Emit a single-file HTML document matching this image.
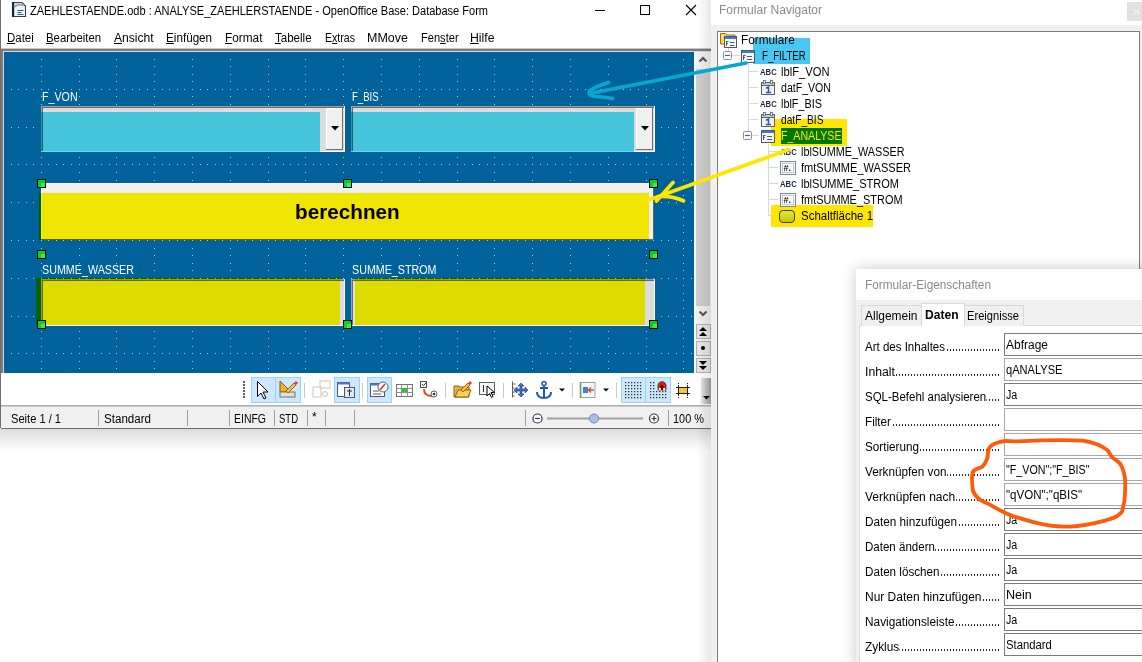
<!DOCTYPE html><html><head><meta charset="utf-8"><style>
*{margin:0;padding:0}
html,body{width:1142px;height:662px;overflow:hidden;background:#fff}
body{position:relative;font-family:"Liberation Sans",sans-serif;}
.r{position:absolute;}
.t{position:absolute;white-space:nowrap;transform-origin:0 0;font-family:"Liberation Sans",sans-serif;}
u{text-decoration:underline;text-underline-offset:1px;text-decoration-thickness:1px}
.lab{font-size:12px;line-height:12px;height:15px;color:#000;width:135px;overflow:hidden;}
.dots{letter-spacing:-0.2px}
</style></head><body><div class="r" style="left:0px;top:0px;width:711px;height:428px;background:#fff;"></div>
<div class="r" style="left:0px;top:0px;width:1px;height:428px;background:#707070;"></div>
<svg class="r" style="left:11px;top:1px" width="16" height="18" viewBox="0 0 16 18">
<path d="M1.5 1.5h9.5l3.5 3.5v10.5h-13z" fill="#f2f5f8" stroke="#3a4048" stroke-width="1.1"/>
<path d="M1 1h2.2v15H1z" fill="#1a2430"/>
<path d="M3 6C6 3.5 9 3 12.5 4.5" stroke="#8a9aac" stroke-width="1.8" fill="none"/>
<path d="M3 3.5C6 2.5 8 2.5 10 3" stroke="#c8d2dc" stroke-width="1.2" fill="none"/>
<path d="M6.5 9.5h6M6.5 11.5h4M6.5 13.5h6" stroke="#2a5a8a" stroke-width="1.2"/>
</svg>
<div class="t" style="left:30.00px;top:4.74px;font-size:12px;line-height:12px;color:#000;transform:scaleX(0.9185);">ZAEHLESTAENDE.odb : ANALYSE_ZAEHLERSTAENDE - OpenOffice Base: Database Form</div>
<div class="r" style="left:595px;top:10px;width:10px;height:1px;background:#000;"></div>
<div class="r" style="left:640px;top:5px;width:10px;height:10px;border:1px solid #000;box-sizing:border-box;"></div>
<svg class="r" style="left:685px;top:4px" width="12" height="12" viewBox="0 0 12 12"><path d="M1 1L11 11M11 1L1 11" stroke="#000" stroke-width="1.1"/></svg>
<div class="t" style="left:7.10px;top:31.84px;font-size:12px;line-height:12px;color:#000;transform:scaleX(0.9531);"><u>D</u>atei</div>
<div class="t" style="left:46.10px;top:31.84px;font-size:12px;line-height:12px;color:#000;transform:scaleX(0.9494);"><u>B</u>earbeiten</div>
<div class="t" style="left:114.00px;top:31.84px;font-size:12px;line-height:12px;color:#000;transform:scaleX(1.0089);"><u>A</u>nsicht</div>
<div class="t" style="left:166.20px;top:31.84px;font-size:12px;line-height:12px;color:#000;transform:scaleX(0.9732);"><u>E</u>infügen</div>
<div class="t" style="left:225.00px;top:31.84px;font-size:12px;line-height:12px;color:#000;transform:scaleX(0.9842);"><u>F</u>ormat</div>
<div class="t" style="left:275.30px;top:31.84px;font-size:12px;line-height:12px;color:#000;transform:scaleX(0.9625);"><u>T</u>abelle</div>
<div class="t" style="left:324.60px;top:31.84px;font-size:12px;line-height:12px;color:#000;transform:scaleX(0.8822);">E<u>x</u>tras</div>
<div class="t" style="left:367.30px;top:31.84px;font-size:12px;line-height:12px;color:#000;transform:scaleX(1.0397);">MMove</div>
<div class="t" style="left:420.50px;top:31.84px;font-size:12px;line-height:12px;color:#000;transform:scaleX(0.9243);">Fen<u>s</u>ter</div>
<div class="t" style="left:470.20px;top:31.84px;font-size:12px;line-height:12px;color:#000;transform:scaleX(1.0206);"><u>H</u>ilfe</div>
<div class="r" style="left:1px;top:48px;width:710px;height:1px;background:#c4c4c4;"></div>
<div class="r" style="left:1px;top:49px;width:710px;height:2px;background:#7c7c7c;"></div>
<div class="r" style="left:3px;top:51px;width:708px;height:1px;background:#dcdcdc;"></div>
<div class="r" style="left:1px;top:51px;width:2px;height:322px;background:#7c7c7c;"></div>
<div class="r" style="left:3px;top:51px;width:1px;height:322px;background:#d8d8d8;"></div>
<div class="r" style="left:4px;top:52px;width:690px;height:321px;background:#00629b;"></div>
<svg class="r" style="left:0;top:0" width="711" height="428"><path d="M11 89h1v1h-1zM11 127h1v1h-1zM11 164h1v1h-1zM11 202h1v1h-1zM11 240h1v1h-1zM11 278h1v1h-1zM11 316h1v1h-1zM11 353h1v1h-1zM18 89h1v1h-1zM18 127h1v1h-1zM18 164h1v1h-1zM18 202h1v1h-1zM18 240h1v1h-1zM18 278h1v1h-1zM18 316h1v1h-1zM18 353h1v1h-1zM26 89h1v1h-1zM26 127h1v1h-1zM26 164h1v1h-1zM26 202h1v1h-1zM26 240h1v1h-1zM26 278h1v1h-1zM26 316h1v1h-1zM26 353h1v1h-1zM33 89h1v1h-1zM33 127h1v1h-1zM33 164h1v1h-1zM33 202h1v1h-1zM33 240h1v1h-1zM33 278h1v1h-1zM33 316h1v1h-1zM33 353h1v1h-1zM41 59h1v1h-1zM41 66h1v1h-1zM41 74h1v1h-1zM41 81h1v1h-1zM41 89h1v1h-1zM41 96h1v1h-1zM41 104h1v1h-1zM41 111h1v1h-1zM41 119h1v1h-1zM41 127h1v1h-1zM41 134h1v1h-1zM41 142h1v1h-1zM41 149h1v1h-1zM41 157h1v1h-1zM41 164h1v1h-1zM41 172h1v1h-1zM41 180h1v1h-1zM41 187h1v1h-1zM41 195h1v1h-1zM41 202h1v1h-1zM41 210h1v1h-1zM41 217h1v1h-1zM41 225h1v1h-1zM41 232h1v1h-1zM41 240h1v1h-1zM41 248h1v1h-1zM41 255h1v1h-1zM41 263h1v1h-1zM41 270h1v1h-1zM41 278h1v1h-1zM41 285h1v1h-1zM41 293h1v1h-1zM41 300h1v1h-1zM41 308h1v1h-1zM41 316h1v1h-1zM41 323h1v1h-1zM41 331h1v1h-1zM41 338h1v1h-1zM41 346h1v1h-1zM41 353h1v1h-1zM41 361h1v1h-1zM41 368h1v1h-1zM48 89h1v1h-1zM48 127h1v1h-1zM48 164h1v1h-1zM48 202h1v1h-1zM48 240h1v1h-1zM48 278h1v1h-1zM48 316h1v1h-1zM48 353h1v1h-1zM56 89h1v1h-1zM56 127h1v1h-1zM56 164h1v1h-1zM56 202h1v1h-1zM56 240h1v1h-1zM56 278h1v1h-1zM56 316h1v1h-1zM56 353h1v1h-1zM63 89h1v1h-1zM63 127h1v1h-1zM63 164h1v1h-1zM63 202h1v1h-1zM63 240h1v1h-1zM63 278h1v1h-1zM63 316h1v1h-1zM63 353h1v1h-1zM71 89h1v1h-1zM71 127h1v1h-1zM71 164h1v1h-1zM71 202h1v1h-1zM71 240h1v1h-1zM71 278h1v1h-1zM71 316h1v1h-1zM71 353h1v1h-1zM79 59h1v1h-1zM79 66h1v1h-1zM79 74h1v1h-1zM79 81h1v1h-1zM79 89h1v1h-1zM79 96h1v1h-1zM79 104h1v1h-1zM79 111h1v1h-1zM79 119h1v1h-1zM79 127h1v1h-1zM79 134h1v1h-1zM79 142h1v1h-1zM79 149h1v1h-1zM79 157h1v1h-1zM79 164h1v1h-1zM79 172h1v1h-1zM79 180h1v1h-1zM79 187h1v1h-1zM79 195h1v1h-1zM79 202h1v1h-1zM79 210h1v1h-1zM79 217h1v1h-1zM79 225h1v1h-1zM79 232h1v1h-1zM79 240h1v1h-1zM79 248h1v1h-1zM79 255h1v1h-1zM79 263h1v1h-1zM79 270h1v1h-1zM79 278h1v1h-1zM79 285h1v1h-1zM79 293h1v1h-1zM79 300h1v1h-1zM79 308h1v1h-1zM79 316h1v1h-1zM79 323h1v1h-1zM79 331h1v1h-1zM79 338h1v1h-1zM79 346h1v1h-1zM79 353h1v1h-1zM79 361h1v1h-1zM79 368h1v1h-1zM86 89h1v1h-1zM86 127h1v1h-1zM86 164h1v1h-1zM86 202h1v1h-1zM86 240h1v1h-1zM86 278h1v1h-1zM86 316h1v1h-1zM86 353h1v1h-1zM94 89h1v1h-1zM94 127h1v1h-1zM94 164h1v1h-1zM94 202h1v1h-1zM94 240h1v1h-1zM94 278h1v1h-1zM94 316h1v1h-1zM94 353h1v1h-1zM101 89h1v1h-1zM101 127h1v1h-1zM101 164h1v1h-1zM101 202h1v1h-1zM101 240h1v1h-1zM101 278h1v1h-1zM101 316h1v1h-1zM101 353h1v1h-1zM109 89h1v1h-1zM109 127h1v1h-1zM109 164h1v1h-1zM109 202h1v1h-1zM109 240h1v1h-1zM109 278h1v1h-1zM109 316h1v1h-1zM109 353h1v1h-1zM116 59h1v1h-1zM116 66h1v1h-1zM116 74h1v1h-1zM116 81h1v1h-1zM116 89h1v1h-1zM116 96h1v1h-1zM116 104h1v1h-1zM116 111h1v1h-1zM116 119h1v1h-1zM116 127h1v1h-1zM116 134h1v1h-1zM116 142h1v1h-1zM116 149h1v1h-1zM116 157h1v1h-1zM116 164h1v1h-1zM116 172h1v1h-1zM116 180h1v1h-1zM116 187h1v1h-1zM116 195h1v1h-1zM116 202h1v1h-1zM116 210h1v1h-1zM116 217h1v1h-1zM116 225h1v1h-1zM116 232h1v1h-1zM116 240h1v1h-1zM116 248h1v1h-1zM116 255h1v1h-1zM116 263h1v1h-1zM116 270h1v1h-1zM116 278h1v1h-1zM116 285h1v1h-1zM116 293h1v1h-1zM116 300h1v1h-1zM116 308h1v1h-1zM116 316h1v1h-1zM116 323h1v1h-1zM116 331h1v1h-1zM116 338h1v1h-1zM116 346h1v1h-1zM116 353h1v1h-1zM116 361h1v1h-1zM116 368h1v1h-1zM124 89h1v1h-1zM124 127h1v1h-1zM124 164h1v1h-1zM124 202h1v1h-1zM124 240h1v1h-1zM124 278h1v1h-1zM124 316h1v1h-1zM124 353h1v1h-1zM132 89h1v1h-1zM132 127h1v1h-1zM132 164h1v1h-1zM132 202h1v1h-1zM132 240h1v1h-1zM132 278h1v1h-1zM132 316h1v1h-1zM132 353h1v1h-1zM139 89h1v1h-1zM139 127h1v1h-1zM139 164h1v1h-1zM139 202h1v1h-1zM139 240h1v1h-1zM139 278h1v1h-1zM139 316h1v1h-1zM139 353h1v1h-1zM147 89h1v1h-1zM147 127h1v1h-1zM147 164h1v1h-1zM147 202h1v1h-1zM147 240h1v1h-1zM147 278h1v1h-1zM147 316h1v1h-1zM147 353h1v1h-1zM154 59h1v1h-1zM154 66h1v1h-1zM154 74h1v1h-1zM154 81h1v1h-1zM154 89h1v1h-1zM154 96h1v1h-1zM154 104h1v1h-1zM154 111h1v1h-1zM154 119h1v1h-1zM154 127h1v1h-1zM154 134h1v1h-1zM154 142h1v1h-1zM154 149h1v1h-1zM154 157h1v1h-1zM154 164h1v1h-1zM154 172h1v1h-1zM154 180h1v1h-1zM154 187h1v1h-1zM154 195h1v1h-1zM154 202h1v1h-1zM154 210h1v1h-1zM154 217h1v1h-1zM154 225h1v1h-1zM154 232h1v1h-1zM154 240h1v1h-1zM154 248h1v1h-1zM154 255h1v1h-1zM154 263h1v1h-1zM154 270h1v1h-1zM154 278h1v1h-1zM154 285h1v1h-1zM154 293h1v1h-1zM154 300h1v1h-1zM154 308h1v1h-1zM154 316h1v1h-1zM154 323h1v1h-1zM154 331h1v1h-1zM154 338h1v1h-1zM154 346h1v1h-1zM154 353h1v1h-1zM154 361h1v1h-1zM154 368h1v1h-1zM162 89h1v1h-1zM162 127h1v1h-1zM162 164h1v1h-1zM162 202h1v1h-1zM162 240h1v1h-1zM162 278h1v1h-1zM162 316h1v1h-1zM162 353h1v1h-1zM169 89h1v1h-1zM169 127h1v1h-1zM169 164h1v1h-1zM169 202h1v1h-1zM169 240h1v1h-1zM169 278h1v1h-1zM169 316h1v1h-1zM169 353h1v1h-1zM177 89h1v1h-1zM177 127h1v1h-1zM177 164h1v1h-1zM177 202h1v1h-1zM177 240h1v1h-1zM177 278h1v1h-1zM177 316h1v1h-1zM177 353h1v1h-1zM184 89h1v1h-1zM184 127h1v1h-1zM184 164h1v1h-1zM184 202h1v1h-1zM184 240h1v1h-1zM184 278h1v1h-1zM184 316h1v1h-1zM184 353h1v1h-1zM192 59h1v1h-1zM192 66h1v1h-1zM192 74h1v1h-1zM192 81h1v1h-1zM192 89h1v1h-1zM192 96h1v1h-1zM192 104h1v1h-1zM192 111h1v1h-1zM192 119h1v1h-1zM192 127h1v1h-1zM192 134h1v1h-1zM192 142h1v1h-1zM192 149h1v1h-1zM192 157h1v1h-1zM192 164h1v1h-1zM192 172h1v1h-1zM192 180h1v1h-1zM192 187h1v1h-1zM192 195h1v1h-1zM192 202h1v1h-1zM192 210h1v1h-1zM192 217h1v1h-1zM192 225h1v1h-1zM192 232h1v1h-1zM192 240h1v1h-1zM192 248h1v1h-1zM192 255h1v1h-1zM192 263h1v1h-1zM192 270h1v1h-1zM192 278h1v1h-1zM192 285h1v1h-1zM192 293h1v1h-1zM192 300h1v1h-1zM192 308h1v1h-1zM192 316h1v1h-1zM192 323h1v1h-1zM192 331h1v1h-1zM192 338h1v1h-1zM192 346h1v1h-1zM192 353h1v1h-1zM192 361h1v1h-1zM192 368h1v1h-1zM200 89h1v1h-1zM200 127h1v1h-1zM200 164h1v1h-1zM200 202h1v1h-1zM200 240h1v1h-1zM200 278h1v1h-1zM200 316h1v1h-1zM200 353h1v1h-1zM207 89h1v1h-1zM207 127h1v1h-1zM207 164h1v1h-1zM207 202h1v1h-1zM207 240h1v1h-1zM207 278h1v1h-1zM207 316h1v1h-1zM207 353h1v1h-1zM215 89h1v1h-1zM215 127h1v1h-1zM215 164h1v1h-1zM215 202h1v1h-1zM215 240h1v1h-1zM215 278h1v1h-1zM215 316h1v1h-1zM215 353h1v1h-1zM222 89h1v1h-1zM222 127h1v1h-1zM222 164h1v1h-1zM222 202h1v1h-1zM222 240h1v1h-1zM222 278h1v1h-1zM222 316h1v1h-1zM222 353h1v1h-1zM230 59h1v1h-1zM230 66h1v1h-1zM230 74h1v1h-1zM230 81h1v1h-1zM230 89h1v1h-1zM230 96h1v1h-1zM230 104h1v1h-1zM230 111h1v1h-1zM230 119h1v1h-1zM230 127h1v1h-1zM230 134h1v1h-1zM230 142h1v1h-1zM230 149h1v1h-1zM230 157h1v1h-1zM230 164h1v1h-1zM230 172h1v1h-1zM230 180h1v1h-1zM230 187h1v1h-1zM230 195h1v1h-1zM230 202h1v1h-1zM230 210h1v1h-1zM230 217h1v1h-1zM230 225h1v1h-1zM230 232h1v1h-1zM230 240h1v1h-1zM230 248h1v1h-1zM230 255h1v1h-1zM230 263h1v1h-1zM230 270h1v1h-1zM230 278h1v1h-1zM230 285h1v1h-1zM230 293h1v1h-1zM230 300h1v1h-1zM230 308h1v1h-1zM230 316h1v1h-1zM230 323h1v1h-1zM230 331h1v1h-1zM230 338h1v1h-1zM230 346h1v1h-1zM230 353h1v1h-1zM230 361h1v1h-1zM230 368h1v1h-1zM237 89h1v1h-1zM237 127h1v1h-1zM237 164h1v1h-1zM237 202h1v1h-1zM237 240h1v1h-1zM237 278h1v1h-1zM237 316h1v1h-1zM237 353h1v1h-1zM245 89h1v1h-1zM245 127h1v1h-1zM245 164h1v1h-1zM245 202h1v1h-1zM245 240h1v1h-1zM245 278h1v1h-1zM245 316h1v1h-1zM245 353h1v1h-1zM252 89h1v1h-1zM252 127h1v1h-1zM252 164h1v1h-1zM252 202h1v1h-1zM252 240h1v1h-1zM252 278h1v1h-1zM252 316h1v1h-1zM252 353h1v1h-1zM260 89h1v1h-1zM260 127h1v1h-1zM260 164h1v1h-1zM260 202h1v1h-1zM260 240h1v1h-1zM260 278h1v1h-1zM260 316h1v1h-1zM260 353h1v1h-1zM268 59h1v1h-1zM268 66h1v1h-1zM268 74h1v1h-1zM268 81h1v1h-1zM268 89h1v1h-1zM268 96h1v1h-1zM268 104h1v1h-1zM268 111h1v1h-1zM268 119h1v1h-1zM268 127h1v1h-1zM268 134h1v1h-1zM268 142h1v1h-1zM268 149h1v1h-1zM268 157h1v1h-1zM268 164h1v1h-1zM268 172h1v1h-1zM268 180h1v1h-1zM268 187h1v1h-1zM268 195h1v1h-1zM268 202h1v1h-1zM268 210h1v1h-1zM268 217h1v1h-1zM268 225h1v1h-1zM268 232h1v1h-1zM268 240h1v1h-1zM268 248h1v1h-1zM268 255h1v1h-1zM268 263h1v1h-1zM268 270h1v1h-1zM268 278h1v1h-1zM268 285h1v1h-1zM268 293h1v1h-1zM268 300h1v1h-1zM268 308h1v1h-1zM268 316h1v1h-1zM268 323h1v1h-1zM268 331h1v1h-1zM268 338h1v1h-1zM268 346h1v1h-1zM268 353h1v1h-1zM268 361h1v1h-1zM268 368h1v1h-1zM275 89h1v1h-1zM275 127h1v1h-1zM275 164h1v1h-1zM275 202h1v1h-1zM275 240h1v1h-1zM275 278h1v1h-1zM275 316h1v1h-1zM275 353h1v1h-1zM283 89h1v1h-1zM283 127h1v1h-1zM283 164h1v1h-1zM283 202h1v1h-1zM283 240h1v1h-1zM283 278h1v1h-1zM283 316h1v1h-1zM283 353h1v1h-1zM290 89h1v1h-1zM290 127h1v1h-1zM290 164h1v1h-1zM290 202h1v1h-1zM290 240h1v1h-1zM290 278h1v1h-1zM290 316h1v1h-1zM290 353h1v1h-1zM298 89h1v1h-1zM298 127h1v1h-1zM298 164h1v1h-1zM298 202h1v1h-1zM298 240h1v1h-1zM298 278h1v1h-1zM298 316h1v1h-1zM298 353h1v1h-1zM305 59h1v1h-1zM305 66h1v1h-1zM305 74h1v1h-1zM305 81h1v1h-1zM305 89h1v1h-1zM305 96h1v1h-1zM305 104h1v1h-1zM305 111h1v1h-1zM305 119h1v1h-1zM305 127h1v1h-1zM305 134h1v1h-1zM305 142h1v1h-1zM305 149h1v1h-1zM305 157h1v1h-1zM305 164h1v1h-1zM305 172h1v1h-1zM305 180h1v1h-1zM305 187h1v1h-1zM305 195h1v1h-1zM305 202h1v1h-1zM305 210h1v1h-1zM305 217h1v1h-1zM305 225h1v1h-1zM305 232h1v1h-1zM305 240h1v1h-1zM305 248h1v1h-1zM305 255h1v1h-1zM305 263h1v1h-1zM305 270h1v1h-1zM305 278h1v1h-1zM305 285h1v1h-1zM305 293h1v1h-1zM305 300h1v1h-1zM305 308h1v1h-1zM305 316h1v1h-1zM305 323h1v1h-1zM305 331h1v1h-1zM305 338h1v1h-1zM305 346h1v1h-1zM305 353h1v1h-1zM305 361h1v1h-1zM305 368h1v1h-1zM313 89h1v1h-1zM313 127h1v1h-1zM313 164h1v1h-1zM313 202h1v1h-1zM313 240h1v1h-1zM313 278h1v1h-1zM313 316h1v1h-1zM313 353h1v1h-1zM320 89h1v1h-1zM320 127h1v1h-1zM320 164h1v1h-1zM320 202h1v1h-1zM320 240h1v1h-1zM320 278h1v1h-1zM320 316h1v1h-1zM320 353h1v1h-1zM328 89h1v1h-1zM328 127h1v1h-1zM328 164h1v1h-1zM328 202h1v1h-1zM328 240h1v1h-1zM328 278h1v1h-1zM328 316h1v1h-1zM328 353h1v1h-1zM336 89h1v1h-1zM336 127h1v1h-1zM336 164h1v1h-1zM336 202h1v1h-1zM336 240h1v1h-1zM336 278h1v1h-1zM336 316h1v1h-1zM336 353h1v1h-1zM343 59h1v1h-1zM343 66h1v1h-1zM343 74h1v1h-1zM343 81h1v1h-1zM343 89h1v1h-1zM343 96h1v1h-1zM343 104h1v1h-1zM343 111h1v1h-1zM343 119h1v1h-1zM343 127h1v1h-1zM343 134h1v1h-1zM343 142h1v1h-1zM343 149h1v1h-1zM343 157h1v1h-1zM343 164h1v1h-1zM343 172h1v1h-1zM343 180h1v1h-1zM343 187h1v1h-1zM343 195h1v1h-1zM343 202h1v1h-1zM343 210h1v1h-1zM343 217h1v1h-1zM343 225h1v1h-1zM343 232h1v1h-1zM343 240h1v1h-1zM343 248h1v1h-1zM343 255h1v1h-1zM343 263h1v1h-1zM343 270h1v1h-1zM343 278h1v1h-1zM343 285h1v1h-1zM343 293h1v1h-1zM343 300h1v1h-1zM343 308h1v1h-1zM343 316h1v1h-1zM343 323h1v1h-1zM343 331h1v1h-1zM343 338h1v1h-1zM343 346h1v1h-1zM343 353h1v1h-1zM343 361h1v1h-1zM343 368h1v1h-1zM351 89h1v1h-1zM351 127h1v1h-1zM351 164h1v1h-1zM351 202h1v1h-1zM351 240h1v1h-1zM351 278h1v1h-1zM351 316h1v1h-1zM351 353h1v1h-1zM358 89h1v1h-1zM358 127h1v1h-1zM358 164h1v1h-1zM358 202h1v1h-1zM358 240h1v1h-1zM358 278h1v1h-1zM358 316h1v1h-1zM358 353h1v1h-1zM366 89h1v1h-1zM366 127h1v1h-1zM366 164h1v1h-1zM366 202h1v1h-1zM366 240h1v1h-1zM366 278h1v1h-1zM366 316h1v1h-1zM366 353h1v1h-1zM373 89h1v1h-1zM373 127h1v1h-1zM373 164h1v1h-1zM373 202h1v1h-1zM373 240h1v1h-1zM373 278h1v1h-1zM373 316h1v1h-1zM373 353h1v1h-1zM381 59h1v1h-1zM381 66h1v1h-1zM381 74h1v1h-1zM381 81h1v1h-1zM381 89h1v1h-1zM381 96h1v1h-1zM381 104h1v1h-1zM381 111h1v1h-1zM381 119h1v1h-1zM381 127h1v1h-1zM381 134h1v1h-1zM381 142h1v1h-1zM381 149h1v1h-1zM381 157h1v1h-1zM381 164h1v1h-1zM381 172h1v1h-1zM381 180h1v1h-1zM381 187h1v1h-1zM381 195h1v1h-1zM381 202h1v1h-1zM381 210h1v1h-1zM381 217h1v1h-1zM381 225h1v1h-1zM381 232h1v1h-1zM381 240h1v1h-1zM381 248h1v1h-1zM381 255h1v1h-1zM381 263h1v1h-1zM381 270h1v1h-1zM381 278h1v1h-1zM381 285h1v1h-1zM381 293h1v1h-1zM381 300h1v1h-1zM381 308h1v1h-1zM381 316h1v1h-1zM381 323h1v1h-1zM381 331h1v1h-1zM381 338h1v1h-1zM381 346h1v1h-1zM381 353h1v1h-1zM381 361h1v1h-1zM381 368h1v1h-1zM389 89h1v1h-1zM389 127h1v1h-1zM389 164h1v1h-1zM389 202h1v1h-1zM389 240h1v1h-1zM389 278h1v1h-1zM389 316h1v1h-1zM389 353h1v1h-1zM396 89h1v1h-1zM396 127h1v1h-1zM396 164h1v1h-1zM396 202h1v1h-1zM396 240h1v1h-1zM396 278h1v1h-1zM396 316h1v1h-1zM396 353h1v1h-1zM404 89h1v1h-1zM404 127h1v1h-1zM404 164h1v1h-1zM404 202h1v1h-1zM404 240h1v1h-1zM404 278h1v1h-1zM404 316h1v1h-1zM404 353h1v1h-1zM411 89h1v1h-1zM411 127h1v1h-1zM411 164h1v1h-1zM411 202h1v1h-1zM411 240h1v1h-1zM411 278h1v1h-1zM411 316h1v1h-1zM411 353h1v1h-1zM419 59h1v1h-1zM419 66h1v1h-1zM419 74h1v1h-1zM419 81h1v1h-1zM419 89h1v1h-1zM419 96h1v1h-1zM419 104h1v1h-1zM419 111h1v1h-1zM419 119h1v1h-1zM419 127h1v1h-1zM419 134h1v1h-1zM419 142h1v1h-1zM419 149h1v1h-1zM419 157h1v1h-1zM419 164h1v1h-1zM419 172h1v1h-1zM419 180h1v1h-1zM419 187h1v1h-1zM419 195h1v1h-1zM419 202h1v1h-1zM419 210h1v1h-1zM419 217h1v1h-1zM419 225h1v1h-1zM419 232h1v1h-1zM419 240h1v1h-1zM419 248h1v1h-1zM419 255h1v1h-1zM419 263h1v1h-1zM419 270h1v1h-1zM419 278h1v1h-1zM419 285h1v1h-1zM419 293h1v1h-1zM419 300h1v1h-1zM419 308h1v1h-1zM419 316h1v1h-1zM419 323h1v1h-1zM419 331h1v1h-1zM419 338h1v1h-1zM419 346h1v1h-1zM419 353h1v1h-1zM419 361h1v1h-1zM419 368h1v1h-1zM426 89h1v1h-1zM426 127h1v1h-1zM426 164h1v1h-1zM426 202h1v1h-1zM426 240h1v1h-1zM426 278h1v1h-1zM426 316h1v1h-1zM426 353h1v1h-1zM434 89h1v1h-1zM434 127h1v1h-1zM434 164h1v1h-1zM434 202h1v1h-1zM434 240h1v1h-1zM434 278h1v1h-1zM434 316h1v1h-1zM434 353h1v1h-1zM441 89h1v1h-1zM441 127h1v1h-1zM441 164h1v1h-1zM441 202h1v1h-1zM441 240h1v1h-1zM441 278h1v1h-1zM441 316h1v1h-1zM441 353h1v1h-1zM449 89h1v1h-1zM449 127h1v1h-1zM449 164h1v1h-1zM449 202h1v1h-1zM449 240h1v1h-1zM449 278h1v1h-1zM449 316h1v1h-1zM449 353h1v1h-1zM457 59h1v1h-1zM457 66h1v1h-1zM457 74h1v1h-1zM457 81h1v1h-1zM457 89h1v1h-1zM457 96h1v1h-1zM457 104h1v1h-1zM457 111h1v1h-1zM457 119h1v1h-1zM457 127h1v1h-1zM457 134h1v1h-1zM457 142h1v1h-1zM457 149h1v1h-1zM457 157h1v1h-1zM457 164h1v1h-1zM457 172h1v1h-1zM457 180h1v1h-1zM457 187h1v1h-1zM457 195h1v1h-1zM457 202h1v1h-1zM457 210h1v1h-1zM457 217h1v1h-1zM457 225h1v1h-1zM457 232h1v1h-1zM457 240h1v1h-1zM457 248h1v1h-1zM457 255h1v1h-1zM457 263h1v1h-1zM457 270h1v1h-1zM457 278h1v1h-1zM457 285h1v1h-1zM457 293h1v1h-1zM457 300h1v1h-1zM457 308h1v1h-1zM457 316h1v1h-1zM457 323h1v1h-1zM457 331h1v1h-1zM457 338h1v1h-1zM457 346h1v1h-1zM457 353h1v1h-1zM457 361h1v1h-1zM457 368h1v1h-1zM464 89h1v1h-1zM464 127h1v1h-1zM464 164h1v1h-1zM464 202h1v1h-1zM464 240h1v1h-1zM464 278h1v1h-1zM464 316h1v1h-1zM464 353h1v1h-1zM472 89h1v1h-1zM472 127h1v1h-1zM472 164h1v1h-1zM472 202h1v1h-1zM472 240h1v1h-1zM472 278h1v1h-1zM472 316h1v1h-1zM472 353h1v1h-1zM479 89h1v1h-1zM479 127h1v1h-1zM479 164h1v1h-1zM479 202h1v1h-1zM479 240h1v1h-1zM479 278h1v1h-1zM479 316h1v1h-1zM479 353h1v1h-1zM487 89h1v1h-1zM487 127h1v1h-1zM487 164h1v1h-1zM487 202h1v1h-1zM487 240h1v1h-1zM487 278h1v1h-1zM487 316h1v1h-1zM487 353h1v1h-1zM494 59h1v1h-1zM494 66h1v1h-1zM494 74h1v1h-1zM494 81h1v1h-1zM494 89h1v1h-1zM494 96h1v1h-1zM494 104h1v1h-1zM494 111h1v1h-1zM494 119h1v1h-1zM494 127h1v1h-1zM494 134h1v1h-1zM494 142h1v1h-1zM494 149h1v1h-1zM494 157h1v1h-1zM494 164h1v1h-1zM494 172h1v1h-1zM494 180h1v1h-1zM494 187h1v1h-1zM494 195h1v1h-1zM494 202h1v1h-1zM494 210h1v1h-1zM494 217h1v1h-1zM494 225h1v1h-1zM494 232h1v1h-1zM494 240h1v1h-1zM494 248h1v1h-1zM494 255h1v1h-1zM494 263h1v1h-1zM494 270h1v1h-1zM494 278h1v1h-1zM494 285h1v1h-1zM494 293h1v1h-1zM494 300h1v1h-1zM494 308h1v1h-1zM494 316h1v1h-1zM494 323h1v1h-1zM494 331h1v1h-1zM494 338h1v1h-1zM494 346h1v1h-1zM494 353h1v1h-1zM494 361h1v1h-1zM494 368h1v1h-1zM502 89h1v1h-1zM502 127h1v1h-1zM502 164h1v1h-1zM502 202h1v1h-1zM502 240h1v1h-1zM502 278h1v1h-1zM502 316h1v1h-1zM502 353h1v1h-1zM509 89h1v1h-1zM509 127h1v1h-1zM509 164h1v1h-1zM509 202h1v1h-1zM509 240h1v1h-1zM509 278h1v1h-1zM509 316h1v1h-1zM509 353h1v1h-1zM517 89h1v1h-1zM517 127h1v1h-1zM517 164h1v1h-1zM517 202h1v1h-1zM517 240h1v1h-1zM517 278h1v1h-1zM517 316h1v1h-1zM517 353h1v1h-1zM525 89h1v1h-1zM525 127h1v1h-1zM525 164h1v1h-1zM525 202h1v1h-1zM525 240h1v1h-1zM525 278h1v1h-1zM525 316h1v1h-1zM525 353h1v1h-1zM532 59h1v1h-1zM532 66h1v1h-1zM532 74h1v1h-1zM532 81h1v1h-1zM532 89h1v1h-1zM532 96h1v1h-1zM532 104h1v1h-1zM532 111h1v1h-1zM532 119h1v1h-1zM532 127h1v1h-1zM532 134h1v1h-1zM532 142h1v1h-1zM532 149h1v1h-1zM532 157h1v1h-1zM532 164h1v1h-1zM532 172h1v1h-1zM532 180h1v1h-1zM532 187h1v1h-1zM532 195h1v1h-1zM532 202h1v1h-1zM532 210h1v1h-1zM532 217h1v1h-1zM532 225h1v1h-1zM532 232h1v1h-1zM532 240h1v1h-1zM532 248h1v1h-1zM532 255h1v1h-1zM532 263h1v1h-1zM532 270h1v1h-1zM532 278h1v1h-1zM532 285h1v1h-1zM532 293h1v1h-1zM532 300h1v1h-1zM532 308h1v1h-1zM532 316h1v1h-1zM532 323h1v1h-1zM532 331h1v1h-1zM532 338h1v1h-1zM532 346h1v1h-1zM532 353h1v1h-1zM532 361h1v1h-1zM532 368h1v1h-1zM540 89h1v1h-1zM540 127h1v1h-1zM540 164h1v1h-1zM540 202h1v1h-1zM540 240h1v1h-1zM540 278h1v1h-1zM540 316h1v1h-1zM540 353h1v1h-1zM547 89h1v1h-1zM547 127h1v1h-1zM547 164h1v1h-1zM547 202h1v1h-1zM547 240h1v1h-1zM547 278h1v1h-1zM547 316h1v1h-1zM547 353h1v1h-1zM555 89h1v1h-1zM555 127h1v1h-1zM555 164h1v1h-1zM555 202h1v1h-1zM555 240h1v1h-1zM555 278h1v1h-1zM555 316h1v1h-1zM555 353h1v1h-1zM562 89h1v1h-1zM562 127h1v1h-1zM562 164h1v1h-1zM562 202h1v1h-1zM562 240h1v1h-1zM562 278h1v1h-1zM562 316h1v1h-1zM562 353h1v1h-1zM570 59h1v1h-1zM570 66h1v1h-1zM570 74h1v1h-1zM570 81h1v1h-1zM570 89h1v1h-1zM570 96h1v1h-1zM570 104h1v1h-1zM570 111h1v1h-1zM570 119h1v1h-1zM570 127h1v1h-1zM570 134h1v1h-1zM570 142h1v1h-1zM570 149h1v1h-1zM570 157h1v1h-1zM570 164h1v1h-1zM570 172h1v1h-1zM570 180h1v1h-1zM570 187h1v1h-1zM570 195h1v1h-1zM570 202h1v1h-1zM570 210h1v1h-1zM570 217h1v1h-1zM570 225h1v1h-1zM570 232h1v1h-1zM570 240h1v1h-1zM570 248h1v1h-1zM570 255h1v1h-1zM570 263h1v1h-1zM570 270h1v1h-1zM570 278h1v1h-1zM570 285h1v1h-1zM570 293h1v1h-1zM570 300h1v1h-1zM570 308h1v1h-1zM570 316h1v1h-1zM570 323h1v1h-1zM570 331h1v1h-1zM570 338h1v1h-1zM570 346h1v1h-1zM570 353h1v1h-1zM570 361h1v1h-1zM570 368h1v1h-1zM577 89h1v1h-1zM577 127h1v1h-1zM577 164h1v1h-1zM577 202h1v1h-1zM577 240h1v1h-1zM577 278h1v1h-1zM577 316h1v1h-1zM577 353h1v1h-1zM585 89h1v1h-1zM585 127h1v1h-1zM585 164h1v1h-1zM585 202h1v1h-1zM585 240h1v1h-1zM585 278h1v1h-1zM585 316h1v1h-1zM585 353h1v1h-1zM593 89h1v1h-1zM593 127h1v1h-1zM593 164h1v1h-1zM593 202h1v1h-1zM593 240h1v1h-1zM593 278h1v1h-1zM593 316h1v1h-1zM593 353h1v1h-1zM600 89h1v1h-1zM600 127h1v1h-1zM600 164h1v1h-1zM600 202h1v1h-1zM600 240h1v1h-1zM600 278h1v1h-1zM600 316h1v1h-1zM600 353h1v1h-1zM608 59h1v1h-1zM608 66h1v1h-1zM608 74h1v1h-1zM608 81h1v1h-1zM608 89h1v1h-1zM608 96h1v1h-1zM608 104h1v1h-1zM608 111h1v1h-1zM608 119h1v1h-1zM608 127h1v1h-1zM608 134h1v1h-1zM608 142h1v1h-1zM608 149h1v1h-1zM608 157h1v1h-1zM608 164h1v1h-1zM608 172h1v1h-1zM608 180h1v1h-1zM608 187h1v1h-1zM608 195h1v1h-1zM608 202h1v1h-1zM608 210h1v1h-1zM608 217h1v1h-1zM608 225h1v1h-1zM608 232h1v1h-1zM608 240h1v1h-1zM608 248h1v1h-1zM608 255h1v1h-1zM608 263h1v1h-1zM608 270h1v1h-1zM608 278h1v1h-1zM608 285h1v1h-1zM608 293h1v1h-1zM608 300h1v1h-1zM608 308h1v1h-1zM608 316h1v1h-1zM608 323h1v1h-1zM608 331h1v1h-1zM608 338h1v1h-1zM608 346h1v1h-1zM608 353h1v1h-1zM608 361h1v1h-1zM608 368h1v1h-1zM615 89h1v1h-1zM615 127h1v1h-1zM615 164h1v1h-1zM615 202h1v1h-1zM615 240h1v1h-1zM615 278h1v1h-1zM615 316h1v1h-1zM615 353h1v1h-1zM623 89h1v1h-1zM623 127h1v1h-1zM623 164h1v1h-1zM623 202h1v1h-1zM623 240h1v1h-1zM623 278h1v1h-1zM623 316h1v1h-1zM623 353h1v1h-1zM630 89h1v1h-1zM630 127h1v1h-1zM630 164h1v1h-1zM630 202h1v1h-1zM630 240h1v1h-1zM630 278h1v1h-1zM630 316h1v1h-1zM630 353h1v1h-1zM638 89h1v1h-1zM638 127h1v1h-1zM638 164h1v1h-1zM638 202h1v1h-1zM638 240h1v1h-1zM638 278h1v1h-1zM638 316h1v1h-1zM638 353h1v1h-1zM646 59h1v1h-1zM646 66h1v1h-1zM646 74h1v1h-1zM646 81h1v1h-1zM646 89h1v1h-1zM646 96h1v1h-1zM646 104h1v1h-1zM646 111h1v1h-1zM646 119h1v1h-1zM646 127h1v1h-1zM646 134h1v1h-1zM646 142h1v1h-1zM646 149h1v1h-1zM646 157h1v1h-1zM646 164h1v1h-1zM646 172h1v1h-1zM646 180h1v1h-1zM646 187h1v1h-1zM646 195h1v1h-1zM646 202h1v1h-1zM646 210h1v1h-1zM646 217h1v1h-1zM646 225h1v1h-1zM646 232h1v1h-1zM646 240h1v1h-1zM646 248h1v1h-1zM646 255h1v1h-1zM646 263h1v1h-1zM646 270h1v1h-1zM646 278h1v1h-1zM646 285h1v1h-1zM646 293h1v1h-1zM646 300h1v1h-1zM646 308h1v1h-1zM646 316h1v1h-1zM646 323h1v1h-1zM646 331h1v1h-1zM646 338h1v1h-1zM646 346h1v1h-1zM646 353h1v1h-1zM646 361h1v1h-1zM646 368h1v1h-1zM653 89h1v1h-1zM653 127h1v1h-1zM653 164h1v1h-1zM653 202h1v1h-1zM653 240h1v1h-1zM653 278h1v1h-1zM653 316h1v1h-1zM653 353h1v1h-1zM661 89h1v1h-1zM661 127h1v1h-1zM661 164h1v1h-1zM661 202h1v1h-1zM661 240h1v1h-1zM661 278h1v1h-1zM661 316h1v1h-1zM661 353h1v1h-1zM668 89h1v1h-1zM668 127h1v1h-1zM668 164h1v1h-1zM668 202h1v1h-1zM668 240h1v1h-1zM668 278h1v1h-1zM668 316h1v1h-1zM668 353h1v1h-1zM676 89h1v1h-1zM676 127h1v1h-1zM676 164h1v1h-1zM676 202h1v1h-1zM676 240h1v1h-1zM676 278h1v1h-1zM676 316h1v1h-1zM676 353h1v1h-1zM683 59h1v1h-1zM683 66h1v1h-1zM683 74h1v1h-1zM683 81h1v1h-1zM683 89h1v1h-1zM683 96h1v1h-1zM683 104h1v1h-1zM683 111h1v1h-1zM683 119h1v1h-1zM683 127h1v1h-1zM683 134h1v1h-1zM683 142h1v1h-1zM683 149h1v1h-1zM683 157h1v1h-1zM683 164h1v1h-1zM683 172h1v1h-1zM683 180h1v1h-1zM683 187h1v1h-1zM683 195h1v1h-1zM683 202h1v1h-1zM683 210h1v1h-1zM683 217h1v1h-1zM683 225h1v1h-1zM683 232h1v1h-1zM683 240h1v1h-1zM683 248h1v1h-1zM683 255h1v1h-1zM683 263h1v1h-1zM683 270h1v1h-1zM683 278h1v1h-1zM683 285h1v1h-1zM683 293h1v1h-1zM683 300h1v1h-1zM683 308h1v1h-1zM683 316h1v1h-1zM683 323h1v1h-1zM683 331h1v1h-1zM683 338h1v1h-1zM683 346h1v1h-1zM683 353h1v1h-1zM683 361h1v1h-1zM683 368h1v1h-1zM691 89h1v1h-1zM691 127h1v1h-1zM691 164h1v1h-1zM691 202h1v1h-1zM691 240h1v1h-1zM691 278h1v1h-1zM691 316h1v1h-1zM691 353h1v1h-1z" fill="#b8cce0"/></svg>
<div class="t" style="left:41.50px;top:90.74px;font-size:12px;line-height:12px;color:#fff;transform:scaleX(0.8898);">F_VON</div>
<div class="t" style="left:351.60px;top:90.74px;font-size:12px;line-height:12px;color:#fff;transform:scaleX(0.8007);">F_BIS</div>
<div class="r" style="left:41px;top:106px;width:304px;height:46px;background:#fff;"></div><div class="r" style="left:41px;top:106px;width:303px;height:45px;background:#a0a0a0;"></div><div class="r" style="left:42px;top:107px;width:302px;height:44px;background:#696969;"></div><div class="r" style="left:43px;top:108px;width:301px;height:43px;background:#dcdcdc;"></div><div class="r" style="left:41px;top:112px;width:279px;height:40px;background:#50e3ff;mix-blend-mode:multiply;"></div><div class="r" style="left:326px;top:108px;width:17px;height:42px;background:#6d6d6d;"></div><div class="r" style="left:326px;top:108px;width:16px;height:41px;background:#fff;"></div><div class="r" style="left:327px;top:109px;width:15px;height:40px;background:#f0f0f0;"></div><svg class="r" style="left:331px;top:126px" width="8" height="5"><path d="M0 0h8L4 4.5z" fill="#000"/></svg>
<div class="r" style="left:351px;top:106px;width:304px;height:46px;background:#fff;"></div><div class="r" style="left:351px;top:106px;width:303px;height:45px;background:#a0a0a0;"></div><div class="r" style="left:352px;top:107px;width:302px;height:44px;background:#696969;"></div><div class="r" style="left:353px;top:108px;width:301px;height:43px;background:#dcdcdc;"></div><div class="r" style="left:351px;top:112px;width:283px;height:40px;background:#50e3ff;mix-blend-mode:multiply;"></div><div class="r" style="left:636px;top:108px;width:17px;height:42px;background:#6d6d6d;"></div><div class="r" style="left:636px;top:108px;width:16px;height:41px;background:#fff;"></div><div class="r" style="left:637px;top:109px;width:15px;height:40px;background:#f0f0f0;"></div><svg class="r" style="left:640.5px;top:126px" width="8" height="5"><path d="M0 0h8L4 4.5z" fill="#000"/></svg>
<div class="r" style="left:41px;top:183px;width:613px;height:57px;background:#696969;"></div>
<div class="r" style="left:41px;top:183px;width:612px;height:56px;background:#fff;"></div>
<div class="r" style="left:42px;top:184px;width:611px;height:55px;background:#f0f0f0;"></div>
<div class="r" style="left:42px;top:192px;width:607px;height:1px;background:#e8e8f4;"></div>
<div class="r" style="left:39px;top:193px;width:610px;height:47px;background:#fff400;mix-blend-mode:multiply;"></div>
<div class="t" style="left:294.70px;top:202.18px;font-size:20.7px;line-height:20.7px;color:#000;font-weight:bold;transform:scaleX(1.0012);">berechnen</div>
<div class="t" style="left:41.50px;top:263.54px;font-size:12px;line-height:12px;color:#fff;transform:scaleX(0.8940);">SUMME_WASSER</div>
<div class="t" style="left:351.50px;top:263.54px;font-size:12px;line-height:12px;color:#fff;transform:scaleX(0.8926);">SUMME_STROM</div>
<div class="r" style="left:41px;top:279px;width:304px;height:47px;background:#fff;"></div><div class="r" style="left:41px;top:279px;width:303px;height:46px;background:#a0a0a0;"></div><div class="r" style="left:42px;top:280px;width:302px;height:45px;background:#696969;"></div><div class="r" style="left:43px;top:281px;width:301px;height:44px;background:#dcdcdc;"></div>
<div class="r" style="left:351px;top:279px;width:304px;height:47px;background:#fff;"></div><div class="r" style="left:351px;top:279px;width:303px;height:46px;background:#a0a0a0;"></div><div class="r" style="left:352px;top:280px;width:302px;height:45px;background:#696969;"></div><div class="r" style="left:353px;top:281px;width:301px;height:44px;background:#dcdcdc;"></div>
<div class="r" style="left:353px;top:281px;width:1px;height:44px;background:#e4e4ec;"></div>
<div class="r" style="left:36px;top:278px;width:304px;height:47px;background:#ffff00;mix-blend-mode:multiply;"></div>
<div class="r" style="left:355px;top:278px;width:290px;height:47px;background:#ffff00;mix-blend-mode:multiply;"></div>
<div class="r" style="left:37.0px;top:179.0px;width:9px;height:9px;background:#000;"></div>
<div class="r" style="left:38.0px;top:180.0px;width:7px;height:7px;background:#08d028;"></div>
<div class="r" style="left:41.0px;top:183.0px;width:4px;height:4px;background:#3cec4c;"></div>
<div class="r" style="left:343.0px;top:179.0px;width:9px;height:9px;background:#000;"></div>
<div class="r" style="left:344.0px;top:180.0px;width:7px;height:7px;background:#08d028;"></div>
<div class="r" style="left:347.0px;top:183.0px;width:4px;height:4px;background:#3cec4c;"></div>
<div class="r" style="left:649.0px;top:179.0px;width:9px;height:9px;background:#000;"></div>
<div class="r" style="left:650.0px;top:180.0px;width:7px;height:7px;background:#08d028;"></div>
<div class="r" style="left:653.0px;top:183.0px;width:4px;height:4px;background:#3cec4c;"></div>
<div class="r" style="left:37.0px;top:250.0px;width:9px;height:9px;background:#000;"></div>
<div class="r" style="left:38.0px;top:251.0px;width:7px;height:7px;background:#08d028;"></div>
<div class="r" style="left:41.0px;top:254.0px;width:4px;height:4px;background:#3cec4c;"></div>
<div class="r" style="left:649.0px;top:250.0px;width:9px;height:9px;background:#000;"></div>
<div class="r" style="left:650.0px;top:251.0px;width:7px;height:7px;background:#08d028;"></div>
<div class="r" style="left:653.0px;top:254.0px;width:4px;height:4px;background:#3cec4c;"></div>
<div class="r" style="left:37.0px;top:320.0px;width:9px;height:9px;background:#000;"></div>
<div class="r" style="left:38.0px;top:321.0px;width:7px;height:7px;background:#08d028;"></div>
<div class="r" style="left:41.0px;top:324.0px;width:4px;height:4px;background:#3cec4c;"></div>
<div class="r" style="left:343.0px;top:320.0px;width:9px;height:9px;background:#000;"></div>
<div class="r" style="left:344.0px;top:321.0px;width:7px;height:7px;background:#08d028;"></div>
<div class="r" style="left:347.0px;top:324.0px;width:4px;height:4px;background:#3cec4c;"></div>
<div class="r" style="left:649.0px;top:320.0px;width:9px;height:9px;background:#000;"></div>
<div class="r" style="left:650.0px;top:321.0px;width:7px;height:7px;background:#08d028;"></div>
<div class="r" style="left:653.0px;top:324.0px;width:4px;height:4px;background:#3cec4c;"></div>
<div class="r" style="left:694px;top:52px;width:17px;height:321px;background:#f0f0f0;"></div>
<div class="r" style="left:694px;top:52px;width:2px;height:321px;background:#fafafa;"></div>
<div class="r" style="left:696px;top:69px;width:14px;height:237px;background:#cdcdcd;"></div>
<svg class="r" style="left:698px;top:56px" width="10" height="7"><path d="M1.5 5.5L5 2L8.5 5.5" fill="none" stroke="#585858" stroke-width="2.2"/></svg>
<svg class="r" style="left:698px;top:310px" width="10" height="7"><path d="M1.5 1.5L5 5L8.5 1.5" fill="none" stroke="#585858" stroke-width="2.2"/></svg>
<div class="r" style="left:696px;top:324px;width:15px;height:15px;background:#e6e6e6;border:1px solid #b0b0b0;box-sizing:border-box;"></div>
<div class="r" style="left:696px;top:341px;width:15px;height:15px;background:#e6e6e6;border:1px solid #b0b0b0;box-sizing:border-box;"></div>
<div class="r" style="left:696px;top:358px;width:15px;height:15px;background:#e6e6e6;border:1px solid #b0b0b0;box-sizing:border-box;"></div>
<svg class="r" style="left:698px;top:326px" width="10" height="11"><path d="M1 5L5 1L9 5zM1 10L5 6L9 10z" fill="#000"/></svg>
<div class="r" style="left:701px;top:346px;width:4px;height:4px;background:#000;border-radius:2px;"></div>
<svg class="r" style="left:698px;top:360px" width="10" height="11"><path d="M1 1L5 5L9 1zM1 6L5 10L9 6z" fill="#000"/></svg>
<div class="r" style="left:1px;top:373px;width:710px;height:32px;background:#fff;"></div>
<div class="r" style="left:243px;top:381px;width:2px;height:2px;background:#606060;"></div>
<div class="r" style="left:243px;top:384px;width:2px;height:2px;background:#606060;"></div>
<div class="r" style="left:243px;top:387px;width:2px;height:2px;background:#606060;"></div>
<div class="r" style="left:243px;top:390px;width:2px;height:2px;background:#606060;"></div>
<div class="r" style="left:243px;top:393px;width:2px;height:2px;background:#606060;"></div>
<div class="r" style="left:243px;top:396px;width:2px;height:2px;background:#606060;"></div>
<div class="r" style="left:251px;top:377px;width:25px;height:26px;background:#cce8ff;border:1px solid #99d1ff;box-sizing:border-box;"></div>
<div class="r" style="left:275px;top:377px;width:26px;height:26px;background:#cce8ff;border:1px solid #99d1ff;box-sizing:border-box;"></div>
<div class="r" style="left:334px;top:377px;width:26px;height:26px;background:#cce8ff;border:1px solid #99d1ff;box-sizing:border-box;"></div>
<div class="r" style="left:367px;top:377px;width:25px;height:26px;background:#cce8ff;border:1px solid #99d1ff;box-sizing:border-box;"></div>
<div class="r" style="left:621px;top:377px;width:25px;height:26px;background:#cce8ff;border:1px solid #99d1ff;box-sizing:border-box;"></div>
<div class="r" style="left:645px;top:377px;width:26px;height:26px;background:#cce8ff;border:1px solid #99d1ff;box-sizing:border-box;"></div>
<div class="r" style="left:304px;top:383px;width:1px;height:15px;background:#c8c8c8;"></div>
<div class="r" style="left:362px;top:383px;width:1px;height:15px;background:#c8c8c8;"></div>
<div class="r" style="left:445px;top:383px;width:1px;height:15px;background:#c8c8c8;"></div>
<div class="r" style="left:503px;top:383px;width:1px;height:15px;background:#c8c8c8;"></div>
<div class="r" style="left:572px;top:383px;width:1px;height:15px;background:#c8c8c8;"></div>
<div class="r" style="left:616px;top:383px;width:1px;height:15px;background:#c8c8c8;"></div>

<svg class="r" style="left:0;top:0" width="711" height="428">
<!-- select arrow -->
<path d="M257.5 381.5v15l3.5-3.5 3 6 2-1-3-6h5z" fill="#fff" stroke="#000" stroke-width="1"/>
<!-- design mode -->
<path d="M280 381l8 8v3h-8z" fill="#f0b020" stroke="#806010"/>
<rect x="280" y="392" width="15" height="5" fill="#e0e0e0" stroke="#707070"/>
<path d="M286 391l8-8 2 2-8 8z" fill="#f8c040" stroke="#a06010"/>
<path d="M294 383l2-2 2 2-2 2z" fill="#e04040"/>
<!-- disabled icon -->
<rect x="313" y="387" width="8" height="10" fill="none" stroke="#c8c8c8"/>
<rect x="320" y="381" width="10" height="7" fill="none" stroke="#c8c8c8"/>
<circle cx="325" cy="394" r="2.5" fill="none" stroke="#c8c8c8"/>
<!-- control properties -->
<rect x="337.5" y="382.5" width="12" height="14" fill="#fff" stroke="#505870"/>
<rect x="337.5" y="382.5" width="12" height="2" fill="#4a7ad0"/>
<rect x="344.5" y="387.5" width="10" height="10" fill="#e8e8e8" stroke="#505870"/>
<path d="M349.5 389v7M347 391h5" stroke="#303030"/>
<!-- form properties -->
<rect x="370.5" y="383.5" width="14" height="13" fill="#fff" stroke="#505870"/>
<rect x="370.5" y="383.5" width="14" height="2" fill="#4a7ad0"/>
<circle cx="383" cy="387" r="5" fill="#f8f8f8" stroke="#4a6aa0"/>
<path d="M380 390l5-6" stroke="#e03030" stroke-width="1.5"/>
<path d="M373 391h6M373 394h8" stroke="#505870"/>
<!-- table -->
<rect x="396.5" y="384.5" width="16" height="12" fill="#fff" stroke="#707070"/>
<path d="M396.5 388.5h16M396.5 392.5h16M401.5 384.5v12M407.5 384.5v12" stroke="#909090"/>
<rect x="402" y="388" width="5" height="4" fill="#30c030"/>
<!-- tab order -->
<rect x="420.5" y="381.5" width="6" height="6" fill="#fff" stroke="#505050"/>
<path d="M422 384l1.5 1.5 3-3" stroke="#303030" fill="none"/>
<path d="M424 389c0 6 4 7 8 7" stroke="#e05020" stroke-width="2" fill="none"/>
<circle cx="434" cy="394" r="3" fill="#fff" stroke="#606060"/>
<circle cx="434" cy="394" r="1.3" fill="#303030"/>
<!-- folder pencil -->
<path d="M454 386h5l1 1h9v10h-15z" fill="#f0b030" stroke="#906010"/>
<path d="M455 397l3-7h13l-3 7z" fill="#f8d060" stroke="#906010"/>
<path d="M461 390l7-7 2 2-7 7z" fill="#f8c040" stroke="#a06010"/>
<path d="M468 383l2-2 2 2-2 2z" fill="#e04040"/>
<!-- activation order -->
<rect x="479.5" y="382.5" width="15" height="12" fill="#f4f4f4" stroke="#606060"/>
<path d="M483.5 385v7" stroke="#303030"/>
<path d="M487 386v10l2.5-2.5 2 4 1.5-1-2-4h3.5z" fill="#fff" stroke="#000"/>
<!-- position/size -->
<path d="M512.5 381.5v16M512.5 384h3M512.5 388h2M512.5 392h3M512.5 396h2" stroke="#606060"/>
<path d="M521 383l3 3h-2v3h3v-2l3 3-3 3v-2h-3v3h2l-3 3-3-3h2v-3h-3v2l-3-3 3-3v2h3v-3h-2z" fill="#3a70c0" stroke="#204080" stroke-width="0.6"/>
<!-- anchor -->
<circle cx="544" cy="383.5" r="2" fill="none" stroke="#1a5ab0" stroke-width="1.5"/>
<path d="M544 385.5v12M540 388h8M537 392c0 4 3 6 7 6s7-2 7-6" fill="none" stroke="#1a5ab0" stroke-width="2"/>
<path d="M559 388.5h6l-3 3z" fill="#000"/>
<!-- align -->
<path d="M580.5 382v16" stroke="#30a030" stroke-width="1.5"/>
<rect x="581" y="382.5" width="14" height="15" fill="#f8f8f8" stroke="#a0a0a0"/>
<rect x="583" y="387" width="5" height="6" fill="#3a80e0"/>
<path d="M594 390h-5M591 387.5l-2.5 2.5 2.5 2.5" stroke="#e05020" stroke-width="1.6" fill="none"/>
<path d="M603 388.5h6l-3 3z" fill="#000"/>
<!-- frame -->
<rect x="678.5" y="387.5" width="9" height="6" fill="#f8c830" stroke="#202020"/>
<path d="M676 387.5h14M676 393.5h14M678.5 385v11M687.5 385v11" stroke="#202020"/>
<path d="M678.5 383v1M687.5 383v1M678.5 397v1M687.5 397v1" stroke="#202020"/>
<!-- snap magnet -->
<path d="M658 390v-4.5c0-5 8-5 8 0v4.5z" fill="#d02818" stroke="#601008" stroke-width="0.8"/><path d="M660.5 390v-4c0-1.6 3-1.6 3 0v4z" fill="#501008"/>
<rect x="658.8" y="388" width="2" height="2" fill="#fff"/><rect x="663.2" y="388" width="2" height="2" fill="#fff"/>
</svg>
<svg class="r" style="left:0;top:0" width="711" height="428"><path d="M625 382h1.3v1.3h-1.3zM628 382h1.3v1.3h-1.3zM631 382h1.3v1.3h-1.3zM634 382h1.3v1.3h-1.3zM637 382h1.3v1.3h-1.3zM640 382h1.3v1.3h-1.3zM625 385h1.3v1.3h-1.3zM628 385h1.3v1.3h-1.3zM631 385h1.3v1.3h-1.3zM634 385h1.3v1.3h-1.3zM637 385h1.3v1.3h-1.3zM640 385h1.3v1.3h-1.3zM625 388h1.3v1.3h-1.3zM628 388h1.3v1.3h-1.3zM631 388h1.3v1.3h-1.3zM634 388h1.3v1.3h-1.3zM637 388h1.3v1.3h-1.3zM640 388h1.3v1.3h-1.3zM625 391h1.3v1.3h-1.3zM628 391h1.3v1.3h-1.3zM631 391h1.3v1.3h-1.3zM634 391h1.3v1.3h-1.3zM637 391h1.3v1.3h-1.3zM640 391h1.3v1.3h-1.3zM625 394h1.3v1.3h-1.3zM628 394h1.3v1.3h-1.3zM631 394h1.3v1.3h-1.3zM634 394h1.3v1.3h-1.3zM637 394h1.3v1.3h-1.3zM640 394h1.3v1.3h-1.3zM625 397h1.3v1.3h-1.3zM628 397h1.3v1.3h-1.3zM631 397h1.3v1.3h-1.3zM634 397h1.3v1.3h-1.3zM637 397h1.3v1.3h-1.3zM640 397h1.3v1.3h-1.3zM650 382h1.3v1.3h-1.3zM653 382h1.3v1.3h-1.3zM650 385h1.3v1.3h-1.3zM653 385h1.3v1.3h-1.3zM650 388h1.3v1.3h-1.3zM653 388h1.3v1.3h-1.3zM650 391h1.3v1.3h-1.3zM653 391h1.3v1.3h-1.3zM656 391h1.3v1.3h-1.3zM659 391h1.3v1.3h-1.3zM662 391h1.3v1.3h-1.3zM665 391h1.3v1.3h-1.3zM650 394h1.3v1.3h-1.3zM653 394h1.3v1.3h-1.3zM656 394h1.3v1.3h-1.3zM659 394h1.3v1.3h-1.3zM662 394h1.3v1.3h-1.3zM665 394h1.3v1.3h-1.3zM650 397h1.3v1.3h-1.3zM653 397h1.3v1.3h-1.3zM656 397h1.3v1.3h-1.3zM659 397h1.3v1.3h-1.3zM662 397h1.3v1.3h-1.3zM665 397h1.3v1.3h-1.3z" fill="#303030"/></svg>
<div class="r" style="left:701px;top:378px;width:10px;height:26px;background:linear-gradient(90deg,#e8e8e8,#a0a0a0);"></div>
<svg class="r" style="left:703px;top:396px" width="7" height="4"><path d="M0 0h7L3.5 3.5z" fill="#000"/></svg>
<div class="r" style="left:1px;top:405px;width:710px;height:2px;background:linear-gradient(#a0a0a0,#d8d8d8);"></div>
<div class="r" style="left:1px;top:407px;width:710px;height:21px;background:#f0f0f0;"></div>
<div class="r" style="left:1px;top:428px;width:710px;height:1px;background:#6e6e6e;"></div>
<div class="r" style="left:98px;top:410px;width:1px;height:16px;background:#a0a0a0;"></div>
<div class="r" style="left:187px;top:410px;width:1px;height:16px;background:#a0a0a0;"></div>
<div class="r" style="left:229px;top:410px;width:1px;height:16px;background:#a0a0a0;"></div>
<div class="r" style="left:274px;top:410px;width:1px;height:16px;background:#a0a0a0;"></div>
<div class="r" style="left:307px;top:410px;width:1px;height:16px;background:#a0a0a0;"></div>
<div class="r" style="left:325px;top:410px;width:1px;height:16px;background:#a0a0a0;"></div>
<div class="r" style="left:354px;top:410px;width:1px;height:16px;background:#a0a0a0;"></div>
<div class="r" style="left:525px;top:410px;width:1px;height:16px;background:#a0a0a0;"></div>
<div class="r" style="left:668px;top:410px;width:1px;height:16px;background:#a0a0a0;"></div>
<div class="t" style="left:11.00px;top:413.34px;font-size:12px;line-height:12px;color:#000;transform:scaleX(0.9254);">Seite 1 / 1</div>
<div class="t" style="left:104.00px;top:413.34px;font-size:12px;line-height:12px;color:#000;transform:scaleX(0.9651);">Standard</div>
<div class="t" style="left:234.00px;top:413.34px;font-size:12px;line-height:12px;color:#000;transform:scaleX(0.8727);">EINFG</div>
<div class="t" style="left:279.00px;top:413.34px;font-size:12px;line-height:12px;color:#000;transform:scaleX(0.7917);">STD</div>
<div class="t" style="left:312.00px;top:411.34px;font-size:12px;line-height:12px;color:#000;">*</div>
<div class="t" style="left:673.00px;top:413.34px;font-size:12px;line-height:12px;color:#000;transform:scaleX(0.9111);">100 %</div>
<svg class="r" style="left:0;top:0" width="711" height="428">
<circle cx="537.5" cy="418.5" r="4.5" fill="#fff" stroke="#283850" stroke-width="1.2"/><path d="M535 418.5h5" stroke="#283850" stroke-width="1.2"/>
<path d="M547 418.5h96" stroke="#a0a0a0" stroke-width="2"/>
<circle cx="594" cy="418.5" r="4.5" fill="#a8c0e8" stroke="#7088b8"/>
<circle cx="654" cy="418.5" r="4.5" fill="#fff" stroke="#283850" stroke-width="1.2"/><path d="M651.5 418.5h5M654 416v5" stroke="#283850" stroke-width="1.2"/>
</svg>
<div class="r" style="left:0px;top:429px;width:711px;height:22px;background:linear-gradient(rgba(0,0,0,0.14),rgba(0,0,0,0));"></div>
<div class="r" style="left:697px;top:0px;width:14px;height:662px;background:linear-gradient(90deg,rgba(0,0,0,0),rgba(0,0,0,0.09));"></div>
<div class="r" style="left:711px;top:0px;width:431px;height:662px;background:#f0f0f0;"></div>
<div class="r" style="left:711px;top:0px;width:431px;height:25px;background:#fff;"></div>
<div class="t" style="left:719.00px;top:3.84px;font-size:12px;line-height:12px;color:#8a8a8a;transform:scaleX(1.0030);">Formular Navigator</div>
<div class="r" style="left:1127px;top:2px;width:15px;height:19px;background:#e1e1e1;"></div>
<svg class="r" style="left:1133px;top:8px" width="7" height="7"><path d="M1 1L6 6M6 1L1 6" stroke="#fff" stroke-width="1"/></svg>
<div class="r" style="left:717px;top:31px;width:423px;height:640px;background:#fff;border:1px solid #7a7f85;box-sizing:border-box;"></div>
<svg class="r" style="left:0;top:0" width="1142" height="662">
<g stroke="#d8d8d8" fill="none">
<path d="M728.5 47v8M731 55.5h9"/>
<path d="M748.5 63v73M748.5 71.5h10M748.5 87.5h10M748.5 103.5h10M748.5 119.5h10M752 135.5h7"/>
<path d="M768.5 144v72M768.5 151.5h10M768.5 167.5h10M768.5 183.5h10M768.5 199.5h10M768.5 215.5h10"/>
</g>
</svg>
<div class="r" style="left:753px;top:38px;width:57px;height:26px;background:#48c8f0;"></div>
<div class="r" style="left:771px;top:119px;width:76px;height:27px;background:#ffe600;"></div>
<div class="r" style="left:781px;top:128px;width:61px;height:16px;background:#007800;"></div>
<div class="r" style="left:771px;top:205px;width:102px;height:22px;background:#ffe600;"></div>
<svg class="r" style="left:720px;top:32px" width="17" height="16"><path d="M0.5 1.5h5l1.5 1.5h8v9h-14.5z" fill="#f8d458" stroke="#b0680c"/><path d="M1.5 4.5h13" stroke="#fce890"/><rect x="4.5" y="4.5" width="12" height="11" fill="#f4f6f8" stroke="#505864"/><rect x="5" y="5" width="11" height="2" fill="#3a78e0"/><path d="M6.5 9.5h2M6.5 9v5M6.5 11.5h1.5M10 10.5h4.5M10 13.5h4.5" stroke="#505864"/></svg>
<div class="t" style="left:741.30px;top:34.44px;font-size:12px;line-height:12px;color:#000;transform:scaleX(0.9822);">Formulare</div>
<svg class="r" style="left:723px;top:51px" width="10" height="10"><rect x="0.5" y="0.5" width="8" height="8" rx="1" fill="#f8f8f8" stroke="#909090"/><path d="M2 4.5h5" stroke="#3a5ad0"/></svg>
<svg class="r" style="left:741px;top:50px" width="15" height="14"><rect x="0.5" y="0.5" width="13" height="12" fill="#f4f6f8" stroke="#505864"/><rect x="1" y="1" width="12" height="2" fill="#3a78e0"/><path d="M2.5 5.5h2M2.5 5v5M2.5 7.5h1.5M6 6.5h5M6 9.5h5" stroke="#505864"/></svg>
<div class="t" style="left:761.60px;top:50.44px;font-size:12px;line-height:12px;color:#000;transform:scaleX(0.8026);">F_FILTER</div>
<div class="t" style="left:760px;top:67.6px;font-size:8.6px;line-height:8px;font-weight:bold;color:#1a2a40;transform:scaleX(0.9);">ABC</div>
<div class="t" style="left:781.00px;top:66.44px;font-size:12px;line-height:12px;color:#000;transform:scaleX(0.9325);">lblF_VON</div>
<svg class="r" style="left:761px;top:80.1px" width="15" height="16"><rect x="0.5" y="2.5" width="13" height="12" fill="#eef2f6" stroke="#5a6068"/><rect x="1" y="3" width="12" height="2" fill="#c8ccd0"/><path d="M1 5.5h12" stroke="#5a6068"/><rect x="2.5" y="0.5" width="2" height="3" fill="#fff" stroke="#5a6068" stroke-width="0.8"/><rect x="9.5" y="0.5" width="2" height="3" fill="#fff" stroke="#5a6068" stroke-width="0.8"/><path d="M5 8.2l2.5-1.2v5.5M5 12.5h5" stroke="#2a5aa0" stroke-width="1.5" fill="none"/></svg>
<div class="t" style="left:781.00px;top:82.44px;font-size:12px;line-height:12px;color:#000;transform:scaleX(0.8820);">datF_VON</div>
<div class="t" style="left:760px;top:99.6px;font-size:8.6px;line-height:8px;font-weight:bold;color:#1a2a40;transform:scaleX(0.9);">ABC</div>
<div class="t" style="left:781.00px;top:98.44px;font-size:12px;line-height:12px;color:#000;transform:scaleX(0.9041);">lblF_BIS</div>
<svg class="r" style="left:761px;top:112.1px" width="15" height="16"><rect x="0.5" y="2.5" width="13" height="12" fill="#eef2f6" stroke="#5a6068"/><rect x="1" y="3" width="12" height="2" fill="#c8ccd0"/><path d="M1 5.5h12" stroke="#5a6068"/><rect x="2.5" y="0.5" width="2" height="3" fill="#fff" stroke="#5a6068" stroke-width="0.8"/><rect x="9.5" y="0.5" width="2" height="3" fill="#fff" stroke="#5a6068" stroke-width="0.8"/><path d="M5 8.2l2.5-1.2v5.5M5 12.5h5" stroke="#2a5aa0" stroke-width="1.5" fill="none"/></svg>
<div class="t" style="left:781.00px;top:114.44px;font-size:12px;line-height:12px;color:#000;transform:scaleX(0.8496);">datF_BIS</div>
<svg class="r" style="left:743px;top:131.0px" width="10" height="10"><rect x="0.5" y="0.5" width="8" height="8" rx="1" fill="#f8f8f8" stroke="#909090"/><path d="M2 4.5h5" stroke="#3a5ad0"/></svg>
<svg class="r" style="left:761px;top:130.0px" width="15" height="14"><rect x="0.5" y="0.5" width="13" height="12" fill="#f4f6f8" stroke="#505864"/><rect x="1" y="1" width="12" height="2" fill="#3a78e0"/><path d="M2.5 5.5h2M2.5 5v5M2.5 7.5h1.5M6 6.5h5M6 9.5h5" stroke="#505864"/></svg>
<div class="t" style="left:781.00px;top:130.44px;font-size:12px;line-height:12px;color:#ffe600;transform:scaleX(0.8836);">F_ANALYSE</div>
<div class="t" style="left:780px;top:147.6px;font-size:8.6px;line-height:8px;font-weight:bold;color:#1a2a40;transform:scaleX(0.9);">ABC</div>
<div class="t" style="left:801.00px;top:146.44px;font-size:12px;line-height:12px;color:#000;transform:scaleX(0.9007);">lblSUMME_WASSER</div>
<svg class="r" style="left:780px;top:161.0px" width="16" height="14"><rect x="0.5" y="0.5" width="15" height="13" fill="#eef2f6" stroke="#7a8898"/><rect x="2.5" y="2.5" width="11" height="9" fill="#fff" stroke="#c4ccd4"/></svg><div class="t" style="left:783.5px;top:164.0px;font-size:9px;line-height:9px;font-weight:bold;color:#101010">#.</div>
<div class="t" style="left:801.00px;top:162.44px;font-size:12px;line-height:12px;color:#000;transform:scaleX(0.9200);">fmtSUMME_WASSER</div>
<div class="t" style="left:780px;top:179.6px;font-size:8.6px;line-height:8px;font-weight:bold;color:#1a2a40;transform:scaleX(0.9);">ABC</div>
<div class="t" style="left:801.00px;top:178.44px;font-size:12px;line-height:12px;color:#000;transform:scaleX(0.9187);">lblSUMME_STROM</div>
<svg class="r" style="left:780px;top:193.0px" width="16" height="14"><rect x="0.5" y="0.5" width="15" height="13" fill="#eef2f6" stroke="#7a8898"/><rect x="2.5" y="2.5" width="11" height="9" fill="#fff" stroke="#c4ccd4"/></svg><div class="t" style="left:783.5px;top:196.0px;font-size:9px;line-height:9px;font-weight:bold;color:#101010">#.</div>
<div class="t" style="left:801.00px;top:194.44px;font-size:12px;line-height:12px;color:#000;transform:scaleX(0.9117);">fmtSUMME_STROM</div>
<div class="r" style="left:779px;top:210.0px;width:16px;height:13px;border:1px solid #404020;border-radius:4px;background:linear-gradient(#e4e840,#c0c800);box-sizing:border-box"></div>
<div class="t" style="left:801.00px;top:210.44px;font-size:12px;line-height:12px;color:#000;transform:scaleX(0.9552);">Schaltfläche 1</div>
<div class="r" style="left:856px;top:269px;width:300px;height:400px;background:#f0f0f0;box-shadow:0 0 14px rgba(0,0,0,0.22);"></div>
<div class="r" style="left:856px;top:269px;width:286px;height:31px;background:#fff;"></div>
<div class="t" style="left:864.50px;top:278.84px;font-size:12px;line-height:12px;color:#8a8a8a;transform:scaleX(0.9840);">Formular-Eigenschaften</div>
<div class="r" style="left:859px;top:325px;width:290px;height:340px;background:#fff;border:1px solid #d9d9d9;box-sizing:border-box;"></div>
<div class="r" style="left:861px;top:305px;width:61px;height:21px;background:#f0f0f0;border:1px solid #d9d9d9;border-bottom:none;box-sizing:border-box;"></div>
<div class="r" style="left:964px;top:305px;width:60px;height:21px;background:#f0f0f0;border:1px solid #d9d9d9;border-bottom:none;box-sizing:border-box;"></div>
<div class="r" style="left:921px;top:303px;width:44px;height:23px;background:#fff;border:1px solid #d9d9d9;border-bottom:none;box-sizing:border-box;"></div>
<div class="t" style="left:864.50px;top:310.34px;font-size:12px;line-height:12px;color:#000;transform:scaleX(0.9964);">Allgemein</div>
<div class="t" style="left:925.00px;top:308.84px;font-size:12px;line-height:12px;color:#000;font-weight:bold;transform:scaleX(1.0049);">Daten</div>
<div class="t" style="left:966.50px;top:310.34px;font-size:12px;line-height:12px;color:#000;transform:scaleX(0.9282);">Ereignisse</div>
<div class="r" style="left:865px;top:349px;width:134px;height:2px;background:repeating-linear-gradient(90deg,#2a2a2a 0 1px,transparent 1px 3px);background-position-x:1px;"></div>
<div class="t" style="left:865.40px;top:341.44px;font-size:12px;line-height:12px;color:#000;transform:scaleX(0.9595);background:#fff;padding-right:0.5px;">Art des Inhaltes</div>
<div class="r" style="left:1004px;top:333.0px;width:160px;height:23px;background:#fff;border:1px solid #7a7a7a;box-sizing:border-box;"></div>
<div class="t" style="left:1006.30px;top:339.34px;font-size:12px;line-height:12px;color:#000;transform:scaleX(0.9994);">Abfrage</div>
<div class="r" style="left:865px;top:374px;width:134px;height:2px;background:repeating-linear-gradient(90deg,#2a2a2a 0 1px,transparent 1px 3px);background-position-x:1px;"></div>
<div class="t" style="left:865.40px;top:366.44px;font-size:12px;line-height:12px;color:#000;transform:scaleX(1.0186);background:#fff;padding-right:0.5px;">Inhalt</div>
<div class="r" style="left:1004px;top:358.0px;width:160px;height:23px;background:#fff;border:1px solid #a8a8a8;box-sizing:border-box;"></div>
<div class="t" style="left:1006.30px;top:364.34px;font-size:12px;line-height:12px;color:#000;transform:scaleX(0.9224);">qANALYSE</div>
<div class="r" style="left:865px;top:399px;width:134px;height:2px;background:repeating-linear-gradient(90deg,#2a2a2a 0 1px,transparent 1px 3px);background-position-x:1px;"></div>
<div class="t" style="left:865.40px;top:391.44px;font-size:12px;line-height:12px;color:#000;transform:scaleX(0.9564);background:#fff;padding-right:0.5px;">SQL-Befehl analysieren</div>
<div class="r" style="left:1004px;top:383.0px;width:160px;height:23px;background:#fff;border:1px solid #7a7a7a;box-sizing:border-box;"></div>
<div class="t" style="left:1006.30px;top:389.34px;font-size:12px;line-height:12px;color:#000;transform:scaleX(0.8917);">Ja</div>
<div class="r" style="left:865px;top:424px;width:134px;height:2px;background:repeating-linear-gradient(90deg,#2a2a2a 0 1px,transparent 1px 3px);background-position-x:1px;"></div>
<div class="t" style="left:865.40px;top:416.44px;font-size:12px;line-height:12px;color:#000;transform:scaleX(0.9751);background:#fff;padding-right:0.5px;">Filter</div>
<div class="r" style="left:1004px;top:408.0px;width:160px;height:23px;background:#fff;border:1px solid #a8a8a8;box-sizing:border-box;"></div>
<div class="r" style="left:865px;top:449px;width:134px;height:2px;background:repeating-linear-gradient(90deg,#2a2a2a 0 1px,transparent 1px 3px);background-position-x:1px;"></div>
<div class="t" style="left:865.40px;top:441.44px;font-size:12px;line-height:12px;color:#000;transform:scaleX(0.9736);background:#fff;padding-right:0.5px;">Sortierung</div>
<div class="r" style="left:1004px;top:433.0px;width:160px;height:23px;background:#fff;border:1px solid #a8a8a8;box-sizing:border-box;"></div>
<div class="r" style="left:865px;top:474px;width:134px;height:2px;background:repeating-linear-gradient(90deg,#2a2a2a 0 1px,transparent 1px 3px);background-position-x:1px;"></div>
<div class="t" style="left:865.40px;top:466.44px;font-size:12px;line-height:12px;color:#000;transform:scaleX(0.9773);background:#fff;padding-right:0.5px;">Verknüpfen von</div>
<div class="r" style="left:1004px;top:458.0px;width:160px;height:23px;background:#fff;border:1px solid #a8a8a8;box-sizing:border-box;"></div>
<div class="t" style="left:1006.30px;top:464.34px;font-size:12px;line-height:12px;color:#000;transform:scaleX(0.8909);">"F_VON";"F_BIS"</div>
<div class="r" style="left:865px;top:499px;width:134px;height:2px;background:repeating-linear-gradient(90deg,#2a2a2a 0 1px,transparent 1px 3px);background-position-x:1px;"></div>
<div class="t" style="left:865.40px;top:491.44px;font-size:12px;line-height:12px;color:#000;transform:scaleX(1.0015);background:#fff;padding-right:0.5px;">Verknüpfen nach</div>
<div class="r" style="left:1004px;top:483.0px;width:160px;height:23px;background:#fff;border:1px solid #a8a8a8;box-sizing:border-box;"></div>
<div class="t" style="left:1006.30px;top:489.34px;font-size:12px;line-height:12px;color:#000;transform:scaleX(0.9612);">"qVON";"qBIS"</div>
<div class="r" style="left:865px;top:524px;width:134px;height:2px;background:repeating-linear-gradient(90deg,#2a2a2a 0 1px,transparent 1px 3px);background-position-x:1px;"></div>
<div class="t" style="left:865.40px;top:516.44px;font-size:12px;line-height:12px;color:#000;transform:scaleX(0.9780);background:#fff;padding-right:0.5px;">Daten hinzufügen</div>
<div class="r" style="left:1004px;top:508.0px;width:160px;height:23px;background:#fff;border:1px solid #7a7a7a;box-sizing:border-box;"></div>
<div class="t" style="left:1006.30px;top:514.34px;font-size:12px;line-height:12px;color:#000;transform:scaleX(0.8917);">Ja</div>
<div class="r" style="left:865px;top:549px;width:134px;height:2px;background:repeating-linear-gradient(90deg,#2a2a2a 0 1px,transparent 1px 3px);background-position-x:1px;"></div>
<div class="t" style="left:865.40px;top:541.44px;font-size:12px;line-height:12px;color:#000;transform:scaleX(0.9613);background:#fff;padding-right:0.5px;">Daten ändern</div>
<div class="r" style="left:1004px;top:533.0px;width:160px;height:23px;background:#fff;border:1px solid #7a7a7a;box-sizing:border-box;"></div>
<div class="t" style="left:1006.30px;top:539.34px;font-size:12px;line-height:12px;color:#000;transform:scaleX(0.8917);">Ja</div>
<div class="r" style="left:865px;top:574px;width:134px;height:2px;background:repeating-linear-gradient(90deg,#2a2a2a 0 1px,transparent 1px 3px);background-position-x:1px;"></div>
<div class="t" style="left:865.40px;top:566.44px;font-size:12px;line-height:12px;color:#000;transform:scaleX(0.9712);background:#fff;padding-right:0.5px;">Daten löschen</div>
<div class="r" style="left:1004px;top:558.0px;width:160px;height:23px;background:#fff;border:1px solid #7a7a7a;box-sizing:border-box;"></div>
<div class="t" style="left:1006.30px;top:564.34px;font-size:12px;line-height:12px;color:#000;transform:scaleX(0.8917);">Ja</div>
<div class="r" style="left:865px;top:599px;width:134px;height:2px;background:repeating-linear-gradient(90deg,#2a2a2a 0 1px,transparent 1px 3px);background-position-x:1px;"></div>
<div class="t" style="left:865.40px;top:591.44px;font-size:12px;line-height:12px;color:#000;transform:scaleX(0.9980);background:#fff;padding-right:0.5px;">Nur Daten hinzufügen</div>
<div class="r" style="left:1004px;top:583.0px;width:160px;height:23px;background:#fff;border:1px solid #7a7a7a;box-sizing:border-box;"></div>
<div class="t" style="left:1006.30px;top:589.34px;font-size:12px;line-height:12px;color:#000;transform:scaleX(1.0454);">Nein</div>
<div class="r" style="left:865px;top:624px;width:134px;height:2px;background:repeating-linear-gradient(90deg,#2a2a2a 0 1px,transparent 1px 3px);background-position-x:1px;"></div>
<div class="t" style="left:865.40px;top:616.44px;font-size:12px;line-height:12px;color:#000;transform:scaleX(0.9867);background:#fff;padding-right:0.5px;">Navigationsleiste</div>
<div class="r" style="left:1004px;top:608.0px;width:160px;height:23px;background:#fff;border:1px solid #7a7a7a;box-sizing:border-box;"></div>
<div class="t" style="left:1006.30px;top:614.34px;font-size:12px;line-height:12px;color:#000;transform:scaleX(0.8917);">Ja</div>
<div class="r" style="left:865px;top:649px;width:134px;height:2px;background:repeating-linear-gradient(90deg,#2a2a2a 0 1px,transparent 1px 3px);background-position-x:1px;"></div>
<div class="t" style="left:865.40px;top:641.44px;font-size:12px;line-height:12px;color:#000;transform:scaleX(0.9865);background:#fff;padding-right:0.5px;">Zyklus</div>
<div class="r" style="left:1004px;top:633.0px;width:160px;height:23px;background:#fff;border:1px solid #7a7a7a;box-sizing:border-box;"></div>
<div class="t" style="left:1006.30px;top:639.34px;font-size:12px;line-height:12px;color:#000;transform:scaleX(0.9405);">Standard</div>
<svg class="r" style="left:0;top:0" width="1142" height="662">
<g fill="none" stroke-linecap="round" stroke-linejoin="round">
<path d="M746 63L592 93M608.5 82.5C600 85 593 88 589.5 91C588.5 94 590 96 595 96.5C602 97 609 97.5 612.5 98.5" stroke="#06a8d2" stroke-width="3.7"/>
<path d="M789 149.5L643 202M673 182.5L656.5 201M660 196.5C668 196 677 198 683.5 200.8" stroke="#ffe500" stroke-width="3.7"/>
<path d="M1107.6 450.4C1100 444 1092 442 1082.7 440.6C1060 439.5 1035 440.5 1017.4 441.3C1012 441.3 1008 440.9 1005.3 440.9C998 442 993 444 990.2 446.6C988 449 988 451 988 452.7C988 455 987.5 457 987.2 458.7C986 462 984.5 464.5 982.7 466.3C979 468.5 975.5 469 973.6 470.8C972 473 972 476 972 478.3C972 482 972.3 486 972.8 490.4C974 494 976.5 497 979.6 499.5C983 501.5 986.5 503 990.2 504.8C995 507.5 1000 510.5 1005.3 513C1012 516 1020 518.5 1028 520.6C1035 522.5 1041 524 1047.6 525.2C1055 526.5 1062 526.7 1070 526.7C1085 526 1096 523 1105.3 520.6C1110 519 1114 518 1117.4 516C1120 514 1121 513 1122 511.6C1124 505 1125 499 1125 493.4C1125.3 488 1125.3 483 1125 478.3C1124 472 1122.5 467.5 1120.4 464C1117 460 1113.5 459 1111.4 456.4C1110 454 1108.7 452 1107.6 450.4" stroke="#ff5a0a" stroke-width="3.8"/>
</g>
</svg></body></html>
